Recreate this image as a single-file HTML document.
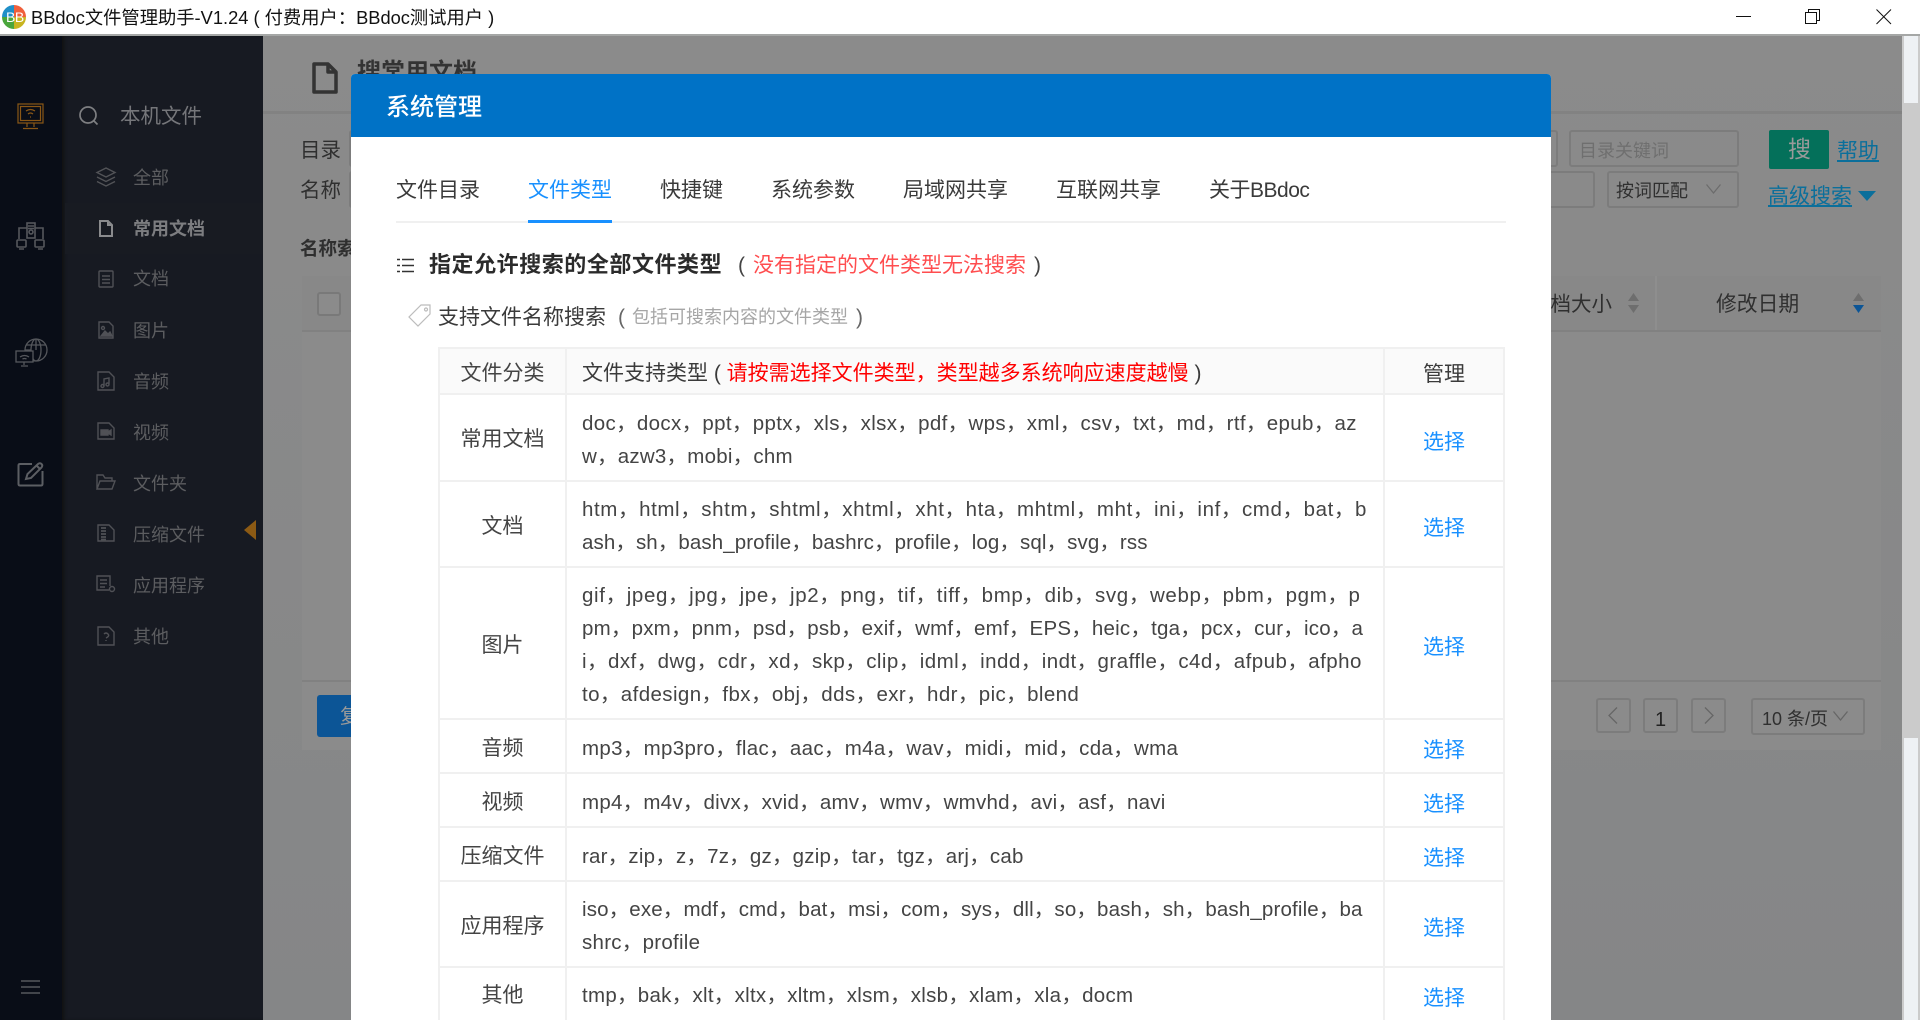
<!DOCTYPE html>
<html lang="zh"><head><meta charset="utf-8"><title>BBdoc</title>
<style>
html,body{margin:0;padding:0;width:1920px;height:1020px;overflow:hidden;background:#fff}
body{position:relative;font-family:"Liberation Sans","Noto Sans CJK SC",sans-serif;color:#3a3a3a}
.a{position:absolute}
.t{position:absolute;white-space:nowrap;line-height:1}
svg{position:absolute;overflow:visible}
.box{position:absolute;box-sizing:border-box;border:2px solid #7c7c7c;border-radius:3px}
.m{font-size:18px;color:#5c5d60}
.r{position:absolute;left:438px;width:1067px;box-sizing:border-box;border-top:2px solid #f0f0f0;border-left:2px solid #f0f0f0;border-right:2px solid #f0f0f0;display:flex;font-size:20.5px;color:#444}
.c1{width:125px;box-sizing:border-box;display:flex;align-items:center;justify-content:center;color:#444;font-size:21px}
.c2{width:818px;box-sizing:border-box;border-left:2px solid #f0f0f0;padding-left:15px;padding-top:3px;display:flex;flex-direction:column;justify-content:center;line-height:33px;white-space:nowrap}
.c3{flex:1;box-sizing:border-box;border-left:2px solid #f0f0f0;display:flex;align-items:center;justify-content:center;color:#1890ff;font-size:21px;padding-top:5px}
.tab{position:absolute;top:180px;font-size:21px;line-height:1;white-space:nowrap;color:#3a3a3a}
</style></head><body>

<!-- title bar -->
<div class="a" style="left:0;top:0;width:1920px;height:34px;background:#fff"></div>
<div class="a" style="left:2px;top:5px;width:24px;height:24px;border-radius:50%;background:conic-gradient(#f0603c 0 25%,#c8b420 25% 50%,#4aa63c 50% 75%,#1f8fc8 75% 100%)"></div>
<div class="t" style="left:6px;top:10px;font-size:14px;color:#fff;letter-spacing:-.5px">BB</div>
<div class="t" style="left:31px;top:9px;font-size:18.3px;color:#111">BBdoc文件管理助手-V1.24 ( 付费用户：BBdoc测试用户 )</div>
<div class="a" style="left:1736px;top:16px;width:15px;height:1px;background:#111"></div>
<svg style="left:1805px;top:9px" width="16" height="16" fill="none" stroke="#111" stroke-width="1"><rect x=".5" y="3.5" width="11" height="11"/><path d="M3.5 3.5V.5H14.5V11.5H11.5"/></svg>
<svg style="left:1876px;top:9px" width="16" height="16" fill="none" stroke="#111" stroke-width="1"><path d="M.5.5 15 15M15 .5.5 15"/></svg>

<!-- main background -->
<div class="a" style="left:0;top:34px;width:1902px;height:986px;background:linear-gradient(#8b8b8b,#858687)"></div>
<div class="a" style="left:0;top:34px;width:1920px;height:2px;background:#a5a7a6"></div>
<div class="a" style="left:1902px;top:36px;width:18px;height:984px;background:#cbcbcb"></div>
<div class="a" style="left:1904px;top:36px;width:14px;height:67px;background:#eef1f4"></div>
<div class="a" style="left:1904px;top:738px;width:14px;height:282px;background:#eef1f4"></div>

<!-- sidebars -->
<div class="a" style="left:0;top:36px;width:62px;height:984px;background:#090d17"></div>
<div class="a" style="left:62px;top:36px;width:201px;height:984px;background:#171a22;box-shadow:inset 3px 0 3px -1px #111"></div>
<div class="a" style="left:65px;top:203px;width:198px;height:51px;background:#181b22"></div>

<svg style="left:17px;top:103px" width="28" height="28" fill="none" stroke="#8a5716" stroke-width="1.2"><rect x="1" y="1" width="25" height="19"/><rect x="3.5" y="3.5" width="20" height="14"/><path d="M9 8q4.500-3 9 0M11 11q2.500-2 5 0M13 14h1M10 20v4M17 20v4M6 25.500h15"/></svg>
<svg style="left:16px;top:222px" width="30" height="30" fill="none" stroke="#55575c" stroke-width="1.6"><rect x="11" y="1" width="8" height="15"/><circle cx="15" cy="10" r="2"/><path d="M12 4h6M12 6.500h6M11 6H3V17M19 6H27V17"/><rect x="1" y="18" width="9" height="7" rx="1"/><rect x="19" y="18" width="9" height="7" rx="1"/><path d="M3 27h5M22 27h5"/></svg>
<svg style="left:15px;top:337px" width="34" height="34" fill="none" stroke="#55575c" stroke-width="1.300"><circle cx="21" cy="13" r="11"/><ellipse cx="21" cy="13" rx="5" ry="11"/><path d="M21 2v11M10 13h6M11 8h20M11 18h6"/><rect x="1" y="14" width="17" height="11" fill="#090d17"/><path d="M5 20q4.500-3 9 0M7.500 22q2-1 4 0M9 25v3M6 29h7"/></svg>
<svg style="left:17px;top:461px" width="28" height="28" fill="none" stroke="#5c5e63" stroke-width="2"><path d="M15 3H3q-1.500 0-1.500 1.500V23q0 1.500 1.500 1.500H24q1.500 0 1.500-1.500V10"/><path d="M9 18l1.500-5L21 3q2-1.500 3.500 0t0 3.500L14 17z"/><path d="M19.500 4.500l3.500 3.500"/></svg>
<svg style="left:21px;top:980px" width="20" height="14" stroke="#56585d" stroke-width="1.500"><path d="M0 1h19M0 7h19M0 13h19"/></svg>

<svg style="left:79px;top:106px" width="20" height="20" fill="none" stroke="#7e7f82" stroke-width="1.700"><circle cx="9" cy="9" r="8"/><path d="M15 15l3.500 3.500"/></svg>
<div class="t" style="left:120px;top:107px;font-size:20.500px;color:#75767a">本机文件</div>

<svg style="left:96px;top:167px" width="20" height="20" fill="none" stroke="#525357" stroke-width="1.400"><path d="M10 1 19 5.500 10 10 1 5.500zM1 10l9 4.500 9-4.500M1 14.500 10 19l9-4.500"/></svg>
<div class="t m" style="left:133px;top:169px">全部</div>
<svg style="left:99px;top:220px" width="14" height="17" fill="none" stroke="#8a8b8d" stroke-width="2"><path d="M1 1h8l4 4v11H1zM9 1v4h4"/></svg>
<div class="t m" style="left:133px;top:220px;font-weight:bold;color:#7c7d80">常用文档</div>
<svg style="left:98px;top:270px" width="16" height="18" fill="none" stroke="#505156" stroke-width="1.400"><rect x="1" y="1" width="14" height="16" rx="1"/><path d="M4 6h8M4 9.500h8M4 13h8"/></svg>
<div class="t m" style="left:133px;top:270px">文档</div>
<svg style="left:98px;top:321px" width="16" height="18" fill="none" stroke="#505156" stroke-width="1.400"><path d="M1 1h10l4 4v12H1z"/><path d="M3 15l4-5 3 3 2-2 2 4z" fill="#505156"/><circle cx="5" cy="7" r="1.500"/></svg>
<div class="t m" style="left:133px;top:322px">图片</div>
<svg style="left:97px;top:371px" width="18" height="20" fill="none" stroke="#505156" stroke-width="1.400"><path d="M1 1h11l5 5v13H1z"/><path d="M7 15V8l5-1v6"/><circle cx="5.500" cy="15" r="1.500"/><circle cx="10.500" cy="13.500" r="1.500"/></svg>
<div class="t m" style="left:133px;top:373px">音频</div>
<svg style="left:97px;top:422px" width="18" height="18" fill="none" stroke="#505156" stroke-width="1.400"><path d="M1 1h11l5 5v11H1z"/><path d="M4 8h7v5H4zM11 10l3-2v5l-3-2z" fill="#505156"/></svg>
<div class="t m" style="left:133px;top:424px">视频</div>
<svg style="left:96px;top:474px" width="20" height="17" fill="none" stroke="#505156" stroke-width="1.400"><path d="M1 15V1h6l2 3h7v3M1 15l3-8h15l-3 8z"/></svg>
<div class="t m" style="left:133px;top:475px">文件夹</div>
<svg style="left:97px;top:524px" width="18" height="18" fill="none" stroke="#505156" stroke-width="1.400"><path d="M1 1h11l5 5v11H1z"/><path d="M4 4h5M4 7h5M4 10h5M4 13h5M4 15.500h5" stroke-width="1.800"/></svg>
<div class="t m" style="left:133px;top:526px">压缩文件</div>
<svg style="left:96px;top:575px" width="20" height="19" fill="none" stroke="#505156" stroke-width="1.400"><path d="M13 15H1V1h13v10M4 5h7M4 8.500h7M4 12h5"/><circle cx="16" cy="14" r="2.500"/></svg>
<div class="t m" style="left:133px;top:577px">应用程序</div>
<svg style="left:97px;top:626px" width="18" height="20" fill="none" stroke="#505156" stroke-width="1.400"><path d="M1 1h11l5 5v13H1z"/><path d="M7 8q2-2 4 0t-2 4M9 14v1"/></svg>
<div class="t m" style="left:133px;top:628px">其他</div>
<svg style="left:244px;top:520px" width="12" height="20"><path d="M12 0V20L0 10z" fill="#8c5a14"/></svg>

<!-- background page -->
<div class="a" style="left:263px;top:111px;width:1639px;height:3px;background:#828282"></div>
<svg style="left:312px;top:62px" width="26" height="32" fill="none" stroke="#333" stroke-width="3.500" stroke-linejoin="round"><path d="M2 2h14l8 8v20H2zM16 2v8h8"/></svg>
<div class="t" style="left:357px;top:61px;font-size:24px;font-weight:bold;color:#333">搜常用文档</div>
<div class="t" style="left:300px;top:141px;font-size:20.500px;color:#2f2f2f">目录</div>
<div class="t" style="left:300px;top:181px;font-size:20.500px;color:#2f2f2f">名称</div>
<div class="t" style="left:300px;top:240px;font-size:18.500px;font-weight:bold;color:#2f2f2f">名称索</div>
<div class="box" style="left:349px;top:130px;width:1209px;height:37px"></div>
<div class="box" style="left:349px;top:171px;width:1246px;height:37px"></div>
<div class="box" style="left:1569px;top:130px;width:170px;height:37px"></div>
<div class="t" style="left:1579px;top:142px;font-size:18px;color:#6f6f6f">目录关键词</div>
<div class="box" style="left:1607px;top:171px;width:132px;height:37px"></div>
<div class="t" style="left:1616px;top:182px;font-size:18px;color:#2f2f2f">按词匹配</div>
<svg style="left:1706px;top:184px" width="15" height="10" fill="none" stroke="#6c6c6c" stroke-width="1.300"><path d="M.5.500 7.500 9 14.500.5"/></svg>
<div class="a" style="left:1769px;top:130px;width:60px;height:39px;background:#04705a;border-radius:2px"></div>
<div class="t" style="left:1788px;top:138px;font-size:23px;color:#9a9a9a">搜</div>
<div class="t" style="left:1837px;top:141px;font-size:21px;color:#0b6f9b;text-decoration:underline">帮助</div>
<div class="t" style="left:1768px;top:186px;font-size:21px;color:#0b6f9b;text-decoration:underline">高级搜索</div>
<svg style="left:1858px;top:191px" width="18" height="10"><path d="M0 0H18L9 10z" fill="#0b6f9b"/></svg>

<div class="a" style="left:302px;top:276px;width:1579px;height:474px;background:#8b8b8b"></div>
<div class="a" style="left:302px;top:276px;width:1579px;height:54px;background:#888888"></div>
<div class="a" style="left:302px;top:330px;width:1579px;height:2px;background:#818181"></div>
<div class="a" style="left:302px;top:680px;width:1579px;height:2px;background:#818181"></div>
<div class="a" style="left:1655px;top:276px;width:2px;height:54px;background:#8e8e8e"></div>
<div class="box" style="left:317px;top:292px;width:24px;height:24px;border-color:#797979;background:#8b8b8b"></div>
<div class="a" style="left:317px;top:695px;width:60px;height:42px;background:#0c5596;border-radius:3px"></div>
<div class="t" style="left:340px;top:707px;font-size:20px;color:#999">复</div>
<div class="t" style="left:1530px;top:295px;font-size:20.500px;color:#2f2f2f">文档大小</div>
<svg style="left:1628px;top:293px" width="11" height="20" fill="#6e6e6e"><path d="M5.500 0 11 8H0zM0 12H11L5.500 20z"/></svg>
<div class="t" style="left:1716px;top:295px;font-size:20.800px;color:#2f2f2f">修改日期</div>
<svg style="left:1853px;top:293px" width="11" height="20"><path d="M5.500 0 11 8H0z" fill="#6e6e6e"/><path d="M0 12H11L5.500 20z" fill="#0c5596"/></svg>
<div class="box" style="left:1596px;top:698px;width:35px;height:35px"></div>
<svg style="left:1608px;top:707px" width="10" height="17" fill="none" stroke="#666" stroke-width="1.300"><path d="M9 .5 1 8.500l8 8"/></svg>
<div class="box" style="left:1643px;top:698px;width:35px;height:35px"></div>
<div class="t" style="left:1655px;top:710px;font-size:20px;color:#222">1</div>
<div class="box" style="left:1691px;top:698px;width:35px;height:35px"></div>
<svg style="left:1704px;top:707px" width="10" height="17" fill="none" stroke="#666" stroke-width="1.300"><path d="M1 .5 9 8.500l-8 8"/></svg>
<div class="box" style="left:1751px;top:698px;width:114px;height:37px"></div>
<div class="t" style="left:1762px;top:710px;font-size:18px;color:#2f2f2f">10 条/页</div>
<svg style="left:1833px;top:711px" width="15" height="10" fill="none" stroke="#666" stroke-width="1.300"><path d="M.5.500 7.500 9 14.500.5"/></svg>

<!-- modal -->
<div class="a" style="left:351px;top:74px;width:1200px;height:946px;background:#fff;border-radius:4px 4px 0 0"></div>
<div class="a" style="left:351px;top:74px;width:1200px;height:63px;background:#0072c6;border-radius:4px 4px 0 0"></div>
<div class="t" style="left:386px;top:96px;font-size:24px;color:#fff;font-weight:500">系统管理</div>

<div class="tab" style="left:396px">文件目录</div>
<div class="tab" style="left:528px;color:#1890ff">文件类型</div>
<div class="tab" style="left:660px">快捷键</div>
<div class="tab" style="left:771px">系统参数</div>
<div class="tab" style="left:903px">局域网共享</div>
<div class="tab" style="left:1056px">互联网共享</div>
<div class="tab" style="left:1209px;letter-spacing:-.5px">关于BBdoc</div>
<div class="a" style="left:396px;top:221px;width:1110px;height:2px;background:#f0f0f0"></div>
<div class="a" style="left:528px;top:220px;width:84px;height:3px;background:#1890ff"></div>

<svg style="left:397px;top:258px" width="18" height="15" stroke="#333" stroke-width="1.500"><path d="M5 1.500H17M5 7.500H17M5 13.500H17M0 1.500H3M0 7.500H3M0 13.500H3"/></svg>
<div class="t" style="left:429px;top:254px;font-size:22px;letter-spacing:.55px;font-weight:bold;color:#2b2b2b">指定允许搜索的全部文件类型</div>
<div class="t" style="left:738px;top:255px;font-size:21px;color:#444">(</div>
<div class="t" style="left:753px;top:255px;font-size:21px;color:#ff4d4f">没有指定的文件类型无法搜索</div>
<div class="t" style="left:1034px;top:255px;font-size:21px;color:#444">)</div>

<svg style="left:408px;top:304px" width="24" height="24" fill="none" stroke="#bcbcbc" stroke-width="1.200"><path d="M13 1h9v9L10 22 1 13z"/><circle cx="18" cy="5.500" r="1.500"/></svg>
<div class="t" style="left:438px;top:307px;font-size:21px;color:#3a3a3a">支持文件名称搜索</div>
<div class="t" style="left:618px;top:307px;font-size:21px;color:#666">(</div>
<div class="t" style="left:632px;top:308px;font-size:18px;color:#a6a6a6">包括可搜索内容的文件类型</div>
<div class="t" style="left:856px;top:307px;font-size:21px;color:#666">)</div>

<!-- table -->
<div class="r" style="top:347px;height:47px;background:#fafafa">
  <div class="c1">文件分类</div>
  <div class="c2" style="font-size:21px;color:#3a3a3a;padding-top:4px"><div>文件支持类型 ( <span style="color:#f00">请按需选择文件类型，类型越多系统响应速度越慢</span> )</div></div>
  <div class="c3" style="color:#3a3a3a;padding:2px 0 0">管理</div>
</div>
<div class="r" style="top:393px;height:88px">
  <div class="c1">常用文档</div>
  <div class="c2"><div style="letter-spacing:.34px">doc，docx，ppt，pptx，xls，xlsx，pdf，wps，xml，csv，txt，md，rtf，epub，az</div><div style="letter-spacing:.23px">w，azw3，mobi，chm</div></div>
  <div class="c3">选择</div>
</div>
<div class="r" style="top:480px;height:87px">
  <div class="c1">文档</div>
  <div class="c2"><div style="letter-spacing:.6px">htm，html，shtm，shtml，xhtml，xht，hta，mhtml，mht，ini，inf，cmd，bat，b</div><div style="letter-spacing:.1px">ash，sh，bash_profile，bashrc，profile，log，sql，svg，rss</div></div>
  <div class="c3">选择</div>
</div>
<div class="r" style="top:566px;height:153px">
  <div class="c1">图片</div>
  <div class="c2"><div style="letter-spacing:.64px">gif，jpeg，jpg，jpe，jp2，png，tif，tiff，bmp，dib，svg，webp，pbm，pgm，p</div><div style="letter-spacing:.21px">pm，pxm，pnm，psd，psb，exif，wmf，emf，EPS，heic，tga，pcx，cur，ico，a</div><div style="letter-spacing:.46px">i，dxf，dwg，cdr，xd，skp，clip，idml，indd，indt，graffle，c4d，afpub，afpho</div><div style="letter-spacing:.4px">to，afdesign，fbx，obj，dds，exr，hdr，pic，blend</div></div>
  <div class="c3">选择</div>
</div>
<div class="r" style="top:718px;height:55px">
  <div class="c1">音频</div>
  <div class="c2"><div style="letter-spacing:.32px">mp3，mp3pro，flac，aac，m4a，wav，midi，mid，cda，wma</div></div>
  <div class="c3">选择</div>
</div>
<div class="r" style="top:772px;height:55px">
  <div class="c1">视频</div>
  <div class="c2"><div style="letter-spacing:.24px">mp4，m4v，divx，xvid，amv，wmv，wmvhd，avi，asf，navi</div></div>
  <div class="c3">选择</div>
</div>
<div class="r" style="top:826px;height:55px">
  <div class="c1">压缩文件</div>
  <div class="c2"><div style="letter-spacing:.21px">rar，zip，z，7z，gz，gzip，tar，tgz，arj，cab</div></div>
  <div class="c3">选择</div>
</div>
<div class="r" style="top:880px;height:87px">
  <div class="c1">应用程序</div>
  <div class="c2"><div style="letter-spacing:.15px">iso，exe，mdf，cmd，bat，msi，com，sys，dll，so，bash，sh，bash_profile，ba</div><div style="letter-spacing:.27px">shrc，profile</div></div>
  <div class="c3">选择</div>
</div>
<div class="r" style="top:966px;height:54px">
  <div class="c1">其他</div>
  <div class="c2"><div style="letter-spacing:.28px">tmp，bak，xlt，xltx，xltm，xlsm，xlsb，xlam，xla，docm</div></div>
  <div class="c3">选择</div>
</div>
</body></html>
